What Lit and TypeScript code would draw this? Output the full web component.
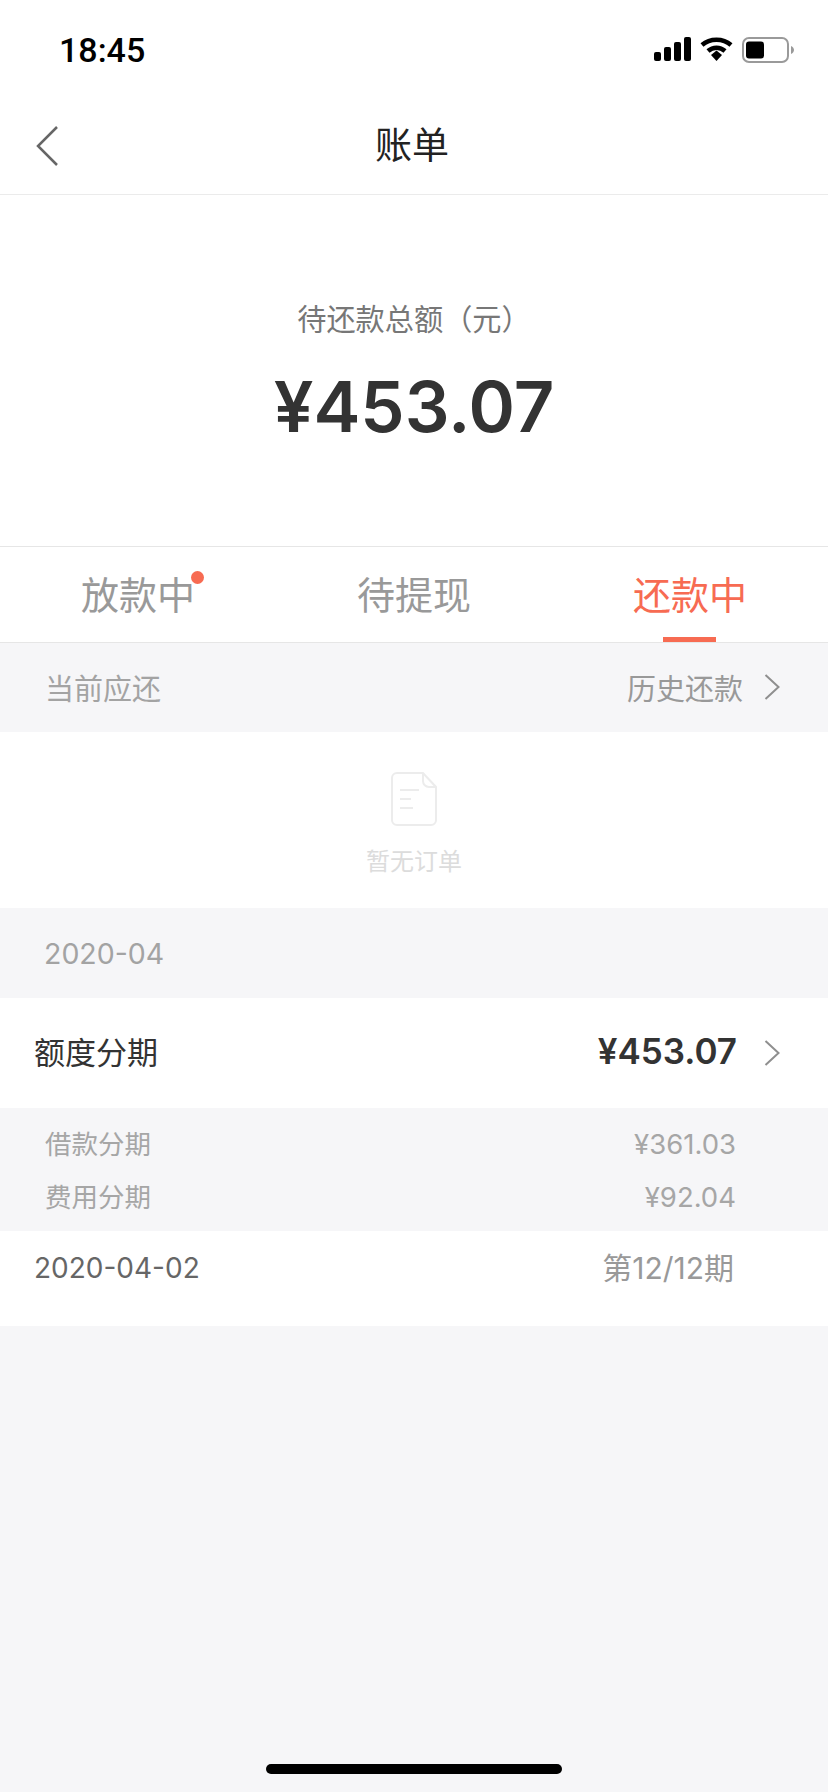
import { html, css, LitElement } from 'lit';
import { customElement, state } from 'lit/decorators.js';

const chevron = html`<svg class="chevron" width="16" height="26" viewBox="0 0 16 26"><path d="M1.5 1 L14.5 13 L1.5 25" fill="none" stroke="#8f8f8f" stroke-width="2"/></svg>`;

@customElement('app-root')
export class AppRoot extends LitElement {
  static styles = css`
  :host {
    display: flex;
    flex-direction: column;
    width: 828px;
    height: 1792px;
    overflow: hidden;
    background: #f6f6f8;
    font-family: Inter, "Noto Sans CJK SC", sans-serif;
  }

  .status {
    height: 88px;
    background: #fff;
    display: flex;
    justify-content: space-between;
    align-items: flex-start;
    padding: 37px 34px 0 59px;
    box-sizing: border-box;
  }
  .time {
    font-family: Roboto, sans-serif;
    font-size: 34px;
    font-weight: 500;
    line-height: 26px;
    color: #000;
  }
  .status-icons {
    display: flex;
    gap: 9px;
    align-items: flex-start;
  }

  .nav {
    height: 107px;
    background: #fff;
    border-bottom: 1px solid #ebebeb;
    box-sizing: border-box;
    padding: 0 36px;
    display: grid;
    grid-template-columns: 1fr auto 1fr;
    align-items: center;
  }
  .nav svg { margin-top: 10px; }
  .title {
    font-size: 37px;
    color: #222;
    margin-top: 4px;
    margin-left: -4px;
  }

  .summary {
    height: 352px;
    background: #fff;
    border-bottom: 1px solid #e6e6e6;
    box-sizing: border-box;
    display: flex;
    flex-direction: column;
    align-items: center;
    padding-top: 105px;
  }
  .summary .label {
    font-size: 29.2px;
    line-height: 40px;
    color: #777;
  }
  .summary .amount {
    font-size: 70.5px;
    font-weight: 600;
    line-height: 90px;
    margin-top: 22px;
    color: #333;
  }

  .tabs {
    height: 96px;
    background: #fff;
    border-bottom: 1px solid #e6e6e6;
    box-sizing: border-box;
    display: grid;
    grid-template-columns: repeat(3, 1fr);
  }
  .tab {
    display: flex;
    justify-content: center;
    padding-top: 25px;
    font-size: 38px;
    line-height: 46px;
    color: #999;
    position: relative;
  }
  .tab span { position: relative; }
  .tab.selected { color: #f76b52; }
  .tab.selected::after {
    content: '';
    position: absolute;
    bottom: 0;
    left: 50%;
    margin-left: -27px;
    width: 53px;
    height: 5px;
    background: #f76b52;
  }
  .dot {
    position: absolute;
    top: -1px;
    right: -9px;
    width: 13px;
    height: 13px;
    border-radius: 50%;
    background: #f76b52;
  }

  .band {
    background: #f6f6f8;
    display: flex;
    justify-content: space-between;
    align-items: center;
    font-size: 29px;
    color: #a3a3a3;
    padding: 0 48px 2px 45px;
    height: 89px;
    box-sizing: border-box;
  }
  .band .more {
    display: flex;
    align-items: center;
    gap: 21px;
    color: #999;
  }

  .empty {
    height: 176px;
    background: #fff;
    display: flex;
    flex-direction: column;
    align-items: center;
    padding-top: 40px;
    box-sizing: border-box;
    font-size: 24px;
    line-height: 34px;
    color: #dcdcdc;
  }
  .empty svg { margin-bottom: 19px; }

  .month {
    height: 90px;
    display: flex;
    align-items: center;
    padding-left: 44px;
    font-size: 28.5px;
    color: #a3a3a3;
    box-sizing: border-box;
  }

  .row {
    background: #fff;
    display: flex;
    justify-content: space-between;
    align-items: center;
    padding: 0 48px 0 34px;
    box-sizing: border-box;
  }
  .row.head { height: 110px; font-size: 31px; color: #333; }
  .row.head .left { margin-top: -5px; }
  .row.head .right { display: flex; align-items: center; gap: 27px; }
  .row.head .total { font-size: 35px; font-weight: 600; margin-top: -5px; }
  .row.foot { height: 95px; font-size: 28px; color: #666; padding-right: 94px; padding-bottom: 22px; }
  .row.foot .period { color: #999; font-size: 30px; margin-top: -3px; }

  .sub {
    height: 123px;
    padding: 10px 92px 0 45px;
    box-sizing: border-box;
    font-size: 26.5px;
    line-height: 53px;
    color: #a6a6a6;
  }
  .sub div { display: flex; justify-content: space-between; }
  .sub .num { font-size: 27.5px; }

  .filler { flex: 1; }
  .home {
    align-self: center;
    width: 296px;
    height: 10px;
    border-radius: 5px;
    background: #000;
    margin-bottom: 18px;
  }
  `;

  @state()
  private tabs: Array<string> = ['放款中', '待提现', '还款中'];

  @state()
  private selected: number = 2;

  private statusIcons() {
    return html`<div class="status-icons">
      <svg width="37" height="24" viewBox="0 0 37 24">
        <rect x="0" y="15" width="7" height="9" rx="2" />
        <rect x="10" y="10" width="7" height="14" rx="2" />
        <rect x="20" y="5" width="7" height="19" rx="2" />
        <rect x="30" y="0" width="7" height="24" rx="2" />
      </svg>
      <svg width="33" height="24" viewBox="0 0 33 24">
        <path d="M2 8 C10 1 23 1 31 8" fill="none" stroke="#000" stroke-width="4.5" />
        <path d="M8 14 C13 9.5 20 9.5 25 14" fill="none" stroke="#000" stroke-width="4.5" />
        <path d="M11 18 L16.5 13.5 L22 18 L16.5 24 Z" />
      </svg>
      <svg width="52" height="26" viewBox="0 0 52 26">
        <rect x="1" y="1" width="45" height="24" rx="6" fill="none" stroke="#9a9a9a" stroke-width="2" />
        <rect x="4" y="4.500" width="18" height="17" rx="3" />
        <path d="M49 9 C51 10 52 11.500 52 13 C52 14.500 51 16 49 17 Z" fill="#9a9a9a" />
      </svg>
    </div>`;
  }

  render() {
    return html`
      <div class="status">
        <div class="time">18:45</div>
        ${this.statusIcons()}
      </div>
      <div class="nav">
        <svg width="22" height="40" viewBox="0 0 22 40"><path d="M21 1 L2 20 L21 39" fill="none" stroke="#666" stroke-width="2.500"/></svg>
        <div class="title">账单</div>
      </div>
      <div class="summary">
        <div class="label">待还款总额（元）</div>
        <div class="amount">¥453.07</div>
      </div>
      <div class="tabs">
        ${this.tabs.map((tab, index) => html`
          <div class="tab ${this.selected == index ? 'selected' : ''}">
            <span>${tab}${index == 0 ? html`<i class="dot"></i>` : ''}</span>
          </div>
        `)}
      </div>
      <div class="band">
        <div>当前应还</div>
        <div class="more">历史还款 ${chevron}</div>
      </div>
      <div class="empty">
        <svg width="46" height="54" viewBox="0 0 46 54" fill="none" stroke="#ececec" stroke-width="2">
          <path d="M6 1 H32 L45 15 V48 A5 5 0 0 1 40 53 H6 A5 5 0 0 1 1 48 V6 A5 5 0 0 1 6 1 Z" />
          <path d="M32 1 V9 A6 6 0 0 0 38 15 H45" />
          <path d="M9 18 H28 M9 27 H20 M9 36 H22" />
        </svg>
        <div>暂无订单</div>
      </div>
      <div class="month">2020-04</div>
      <div class="row head">
        <div class="left">额度分期</div>
        <div class="right"><span class="total">¥453.07</span>${chevron}</div>
      </div>
      <div class="sub">
        <div><span>借款分期</span><span class="num">¥361.03</span></div>
        <div><span>费用分期</span><span class="num">¥92.04</span></div>
      </div>
      <div class="row foot">
        <div>2020-04-02</div>
        <div class="period">第12/12期</div>
      </div>
      <div class="filler"></div>
      <div class="home"></div>
    `;
  }
}
